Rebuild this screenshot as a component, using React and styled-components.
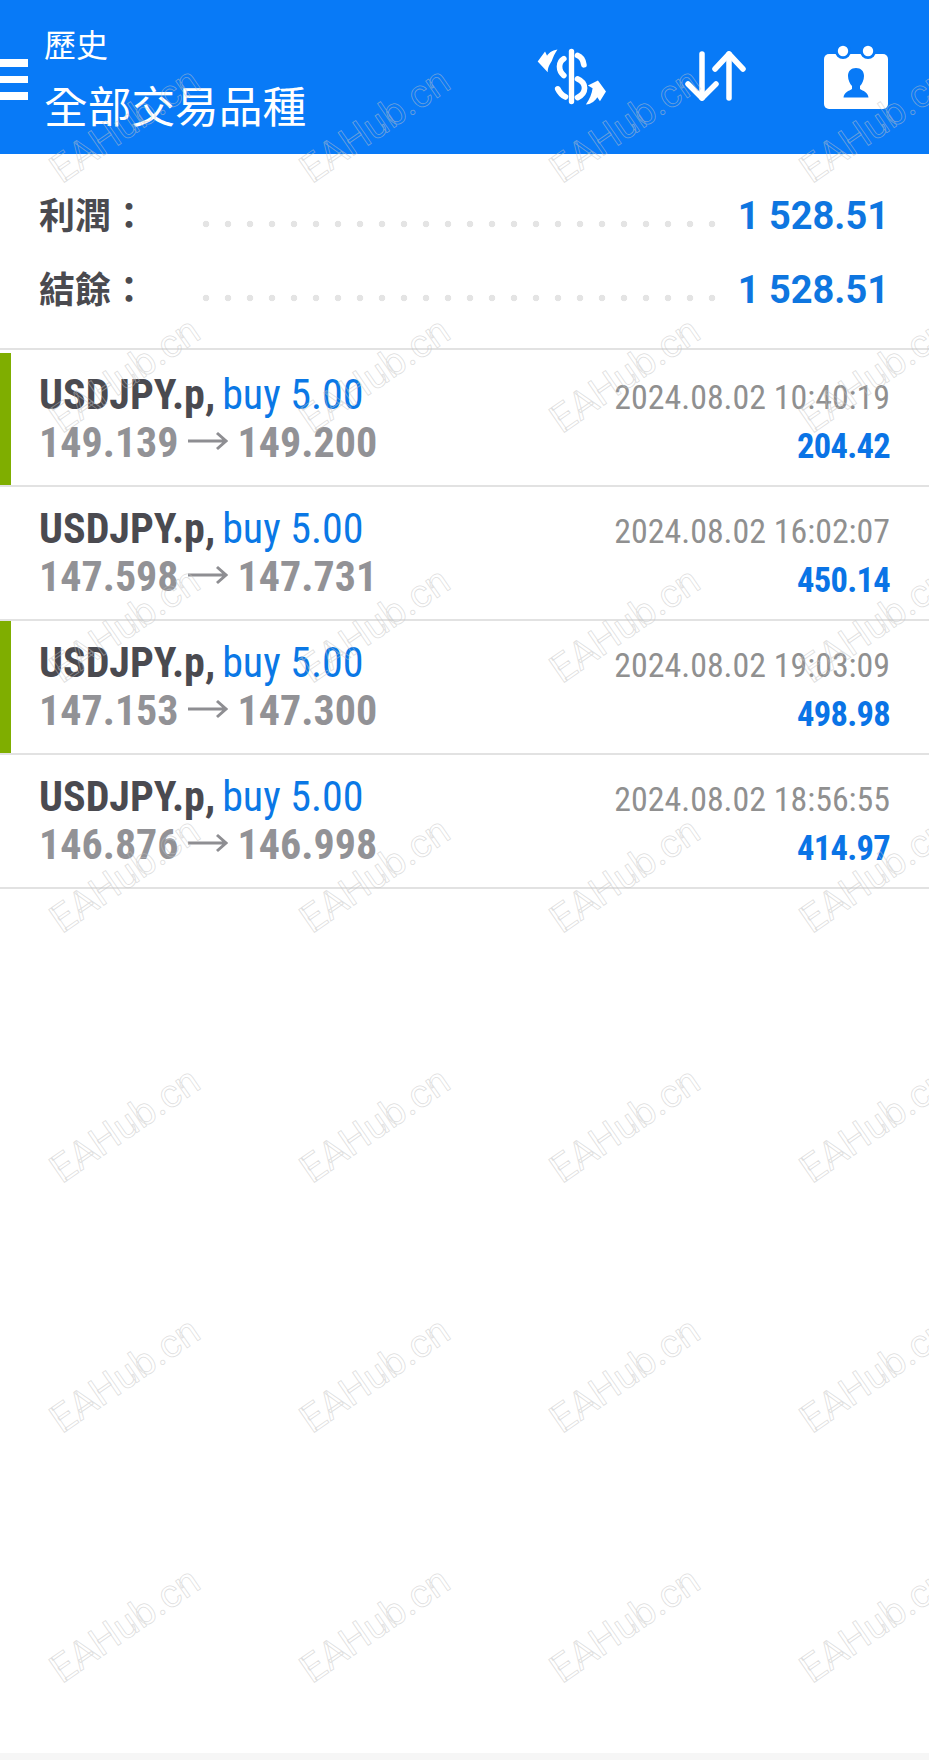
import React from "react";
import styled, { createGlobalStyle } from "styled-components";

const GlobalStyle = createGlobalStyle`
  html, body {
    margin: 0;
    padding: 0;
    background: #fff;
  }
`;

const cjk = `"Noto Sans CJK TC", "Noto Sans", sans-serif`;
const latin = `Roboto, "Liberation Sans", sans-serif`;

const Page = styled.div`
  background: #fff;
  display: flex;
  flex-direction: column;
  height: 1760px;
  overflow: hidden;
  position: relative;
  width: 929px;
`;

const Header = styled.header`
  align-items: center;
  background: #087af7;
  color: #fff;
  display: flex;
  flex-shrink: 0;
  height: 153.5px;
`;

const MenuButton = styled.div`
  display: flex;
  flex-direction: column;
  gap: 9px;
  margin-top: 5px;
  width: 44px;
`;

const MenuBar = styled.span`
  background: #fff;
  display: block;
  height: 7.5px;
  width: 28px;
`;

const Titles = styled.div`
  display: flex;
  flex-direction: column;
  font-family: ${cjk};
`;

const SubTitle = styled.div`
  font-size: 32px;
  line-height: 46px;
  margin-top: 3px;
`;

const Title = styled.div`
  font-size: 43.7px;
  line-height: 64px;
  margin-top: 6px;
`;

const Actions = styled.div`
  align-items: center;
  display: flex;
  margin-left: auto;
`;

const ActionIcon = styled.svg`
  display: block;
  flex-shrink: 0;
  margin-left: ${(p) => p.$gap}px;
  margin-right: ${(p) => p.$end || 0}px;
`;

const Summary = styled.section`
  display: flex;
  flex-direction: column;
  gap: 19.5px;
  padding: 35.5px 40px 31px 39px;
`;

const SummaryRow = styled.div`
  align-items: center;
  display: flex;
  height: 54px;
`;

const SummaryLabel = styled.div`
  color: #4a4a4f;
  font-family: ${cjk};
  font-size: 36px;
  font-weight: 700;
  margin-top: -6px;
  white-space: nowrap;
  width: 164px;
`;

const Leader = styled.div`
  background-image: radial-gradient(circle at center, #e4e4e4 3px, transparent 3.6px);
  background-position: left center;
  background-repeat: repeat-x;
  background-size: 22px 8px;
  height: 8px;
  margin-left: -8px;
  margin-top: 16px;
  width: 528px;
`;

const SummaryValue = styled.div`
  color: #0e76e0;
  font-family: ${latin};
  font-size: 38px;
  font-weight: 700;
  margin-left: auto;
  white-space: nowrap;
`;

const List = styled.div`
  border-top: 2px solid #e2e2e2;
  padding-top: 3px;
`;

const Row = styled.div`
  border-bottom: 2px solid #e2e2e2;
  display: flex;
  height: 132px;
`;

const Marker = styled.div`
  background: ${(p) => (p.$active ? "#7fae00" : "transparent")};
  flex-shrink: 0;
  width: 11px;
`;

const RowBody = styled.div`
  display: flex;
  flex: 1;
  justify-content: space-between;
  padding: 18px 39px 0 28px;
`;

const Column = styled.div`
  display: flex;
  flex-direction: column;
  font-family: ${latin};
  font-stretch: 75%;
  margin-top: ${(p) => p.$drop || 0}px;
  text-align: ${(p) => p.$align || "left"};
`;

const Line = styled.div`
  align-items: center;
  display: flex;
  font-size: 42px;
  height: 48px;
  white-space: nowrap;
`;

const Symbol = styled.span`
  color: #4a4a50;
  font-weight: 700;
`;

const Side = styled.span`
  color: #0a78e6;
  margin-left: 7px;
`;

const Price = styled.span`
  color: #929296;
  font-weight: 700;
`;

const PriceArrow = styled.svg`
  display: block;
  margin: -3px 10px 0 9px;
`;

const Time = styled.div`
  color: #909090;
  font-size: 33.9px;
  line-height: 48px;
  white-space: nowrap;
`;

const Amount = styled.div`
  color: #0a74e6;
  font-size: 34.5px;
  font-weight: 700;
  letter-spacing: -0.7px;
  line-height: 48px;
  white-space: nowrap;
`;

const Spacer = styled.div`
  flex: 1;
`;

const BottomStrip = styled.div`
  background: #f6f6f6;
  flex-shrink: 0;
  height: 7px;
`;

const Watermarks = styled.div`
  display: grid;
  grid-auto-rows: 250px;
  grid-template-columns: repeat(4, 250px);
  left: 0;
  pointer-events: none;
  position: absolute;
  top: 0;
`;

const Watermark = styled.div`
  align-items: center;
  color: transparent;
  display: flex;
  font-family: ${latin};
  font-size: 39px;
  font-weight: 400;
  justify-content: center;
  transform: rotate(-34.5deg);
  white-space: nowrap;
  -webkit-text-stroke: 0.8px rgba(195, 195, 195, 0.55);
`;

const DollarIcon = () => (
  <ActionIcon $gap={0} width="77" height="62" viewBox="40 50 230 185" fill="none">
    <path d="M155 66V216" stroke="#fff" strokeWidth="16" strokeLinecap="round" />
    <g stroke="#fff" strokeWidth="17" strokeLinecap="round">
      <path d="M173 78C184 82 190 92 192 106" />
      <path d="M132 88C115 98 115 124 132 138" />
      <path d="M173 148C201 160 201 190 173 204" />
      <path d="M114 178C120 190 128 198 137 202" />
    </g>
    <path d="M113 60C96 63 86 71 82 79L76 66L54 96L84 128C84 113 90 105 96 95C100 83 105 72 113 60Z" fill="#fff" />
    <path d="M198 225C216 223 226 213 232 203L240 215L258 186L234 153L204 168L218 176C216 192 209 209 198 225Z" fill="#fff" />
  </ActionIcon>
);

const SwapIcon = () => (
  <ActionIcon $gap={75} width="64" height="58" viewBox="684 49 64 58" fill="none">
    <g stroke="#fff" strokeWidth="5.5" strokeLinecap="round" strokeLinejoin="round">
      <path d="M701 55V99" />
      <path d="M687 85L701 99L715 85" />
      <path d="M728 55V99" />
      <path d="M714 70L728 55L742 70" />
    </g>
  </ActionIcon>
);

const CalendarIcon = () => (
  <ActionIcon $gap={75} $end={41} width="64" height="64" viewBox="824 44 64 64" fill="none">
    <rect x="824" y="53" width="64" height="55" rx="5" fill="#fff" />
    <circle cx="843" cy="50" r="8" fill="#087af7" />
    <circle cx="868" cy="50" r="8" fill="#087af7" />
    <circle cx="843" cy="50" r="5.2" fill="#fff" />
    <circle cx="868" cy="50" r="5.2" fill="#fff" />
    <path d="M856 67C861 67 864 70 864 75C864 79 862 83 860 85V88C863 90 868 91 868.500 96.500H843.500C844 91 849 90 852 88V85C850 83 848 79 848 75C848 70 851 67 856 67Z" fill="#087af7" />
  </ActionIcon>
);

const trades = [
  { open: "149.139", close: "149.200", time: "2024.08.02 10:40:19", profit: "204.42", active: true },
  { open: "147.598", close: "147.731", time: "2024.08.02 16:02:07", profit: "450.14" },
  { open: "147.153", close: "147.300", time: "2024.08.02 19:03:09", profit: "498.98", active: true },
  { open: "146.876", close: "146.998", time: "2024.08.02 18:56:55", profit: "414.97" },
];

const totals = [
  { label: "利潤：", value: "1 528.51" },
  { label: "結餘：", value: "1 528.51" },
];

const App = () => {
  return (
    <Page>
      <GlobalStyle />
      <Header>
        <MenuButton>
          <MenuBar />
          <MenuBar />
          <MenuBar />
        </MenuButton>
        <Titles>
          <SubTitle>歷史</SubTitle>
          <Title>全部交易品種</Title>
        </Titles>
        <Actions>
          <DollarIcon />
          <SwapIcon />
          <CalendarIcon />
        </Actions>
      </Header>

      <Summary>
        {totals.map((t) => (
          <SummaryRow key={t.label}>
            <SummaryLabel>{t.label}</SummaryLabel>
            <Leader />
            <SummaryValue>{t.value}</SummaryValue>
          </SummaryRow>
        ))}
      </Summary>

      <List>
        {trades.map((t) => (
          <Row key={t.time}>
            <Marker $active={t.active} />
            <RowBody>
              <Column>
                <Line>
                  <Symbol>USDJPY.p,</Symbol>
                  <Side>buy 5.00</Side>
                </Line>
                <Line>
                  <Price>{t.open}</Price>
                  <PriceArrow width="40" height="20" viewBox="0 0 40 20" fill="none">
                    <path d="M0 10H38M29 2L38 10L29 18" stroke="#8e8e92" strokeWidth="3" />
                  </PriceArrow>
                  <Price>{t.close}</Price>
                </Line>
              </Column>
              <Column $align="right" $drop={3}>
                <Time>{t.time}</Time>
                <Amount>{t.profit}</Amount>
              </Column>
            </RowBody>
          </Row>
        ))}
      </List>

      <Spacer />
      <BottomStrip />

      <Watermarks>
        {Array.from({ length: 28 }, (_, i) => (
          <Watermark key={i}>EAHub.cn</Watermark>
        ))}
      </Watermarks>
    </Page>
  );
};

export default App;
